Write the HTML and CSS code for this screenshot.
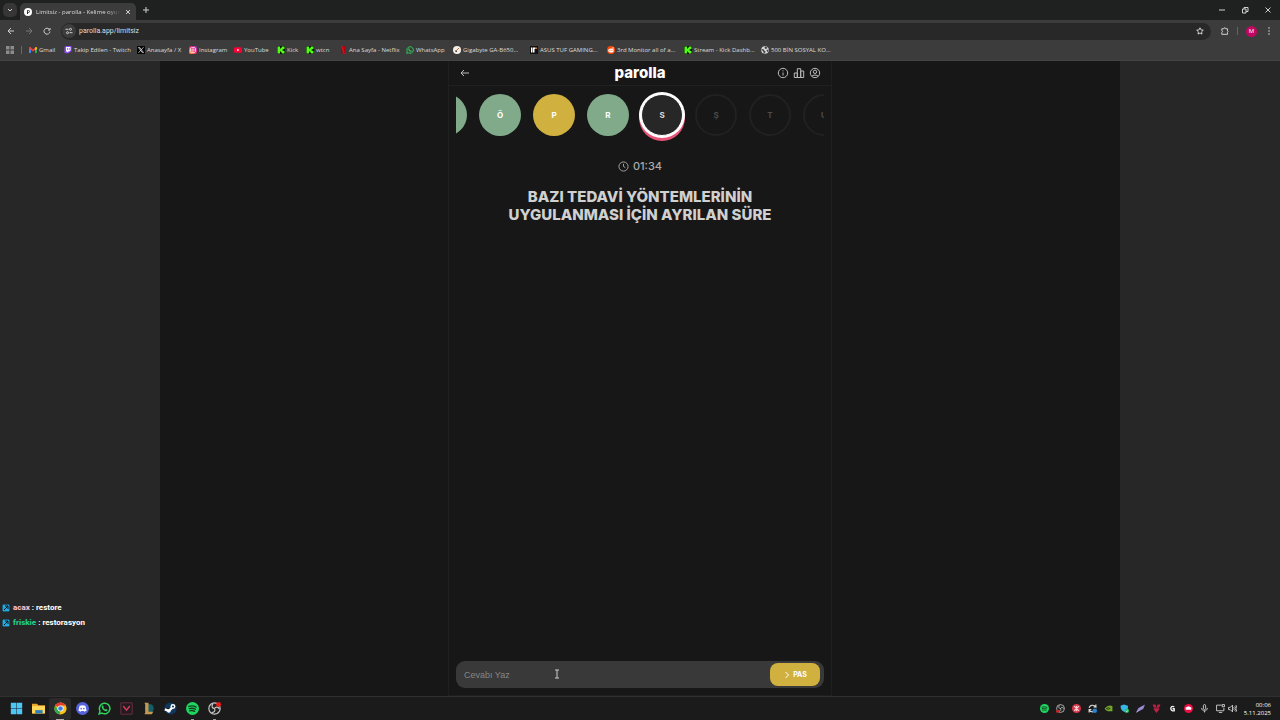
FILE: index.html
```html
<!DOCTYPE html>
<html lang="tr">
  <head>
    <meta charset="utf-8">
    <title>Limitsiz - parolla - Kelime oyunu</title>
    <link rel="stylesheet" href="styles.css">
  </head>
  <body>
    <svg class="defs" aria-hidden="true">
      <symbol id="kick" viewBox="0 0 16 16"><path fill="#0b1408" d="M0 0h16v16H0z"/><path fill="#53fc18" d="M1 1h5v4h2V3h2V1h5v5h-2v1h-2v2h2v1h2v5h-5v-2H8v-2H6v4H1z"/></symbol>
      <symbol id="whatsapp" viewBox="0 0 16 16"><path fill="none" stroke="#2fd45d" stroke-width="1.8" d="M1.4 14.6l1-3.6A6.5 6.5 0 1 1 5 13.7z"/><path fill="#2fd45d" d="M5.3 4.3l1-.1.8 2-.6.9c.5 1 1.300 1.700 2.400 2.200l.8-.8 2 1c0 1.300-1.200 2-2.300 1.800C6.500 10.700 4.800 8.500 4.500 6.300c0-.8.3-1.500.8-2z"/></symbol>
      <symbol id="spotify" viewBox="0 0 16 16"><circle cx="8" cy="8" r="8" fill="#1ed760"/><path fill="none" stroke="#143c20" stroke-width="1.600" stroke-linecap="round" d="M3.500 5.500c3-1 6.500-.7 9 .8M4 8.200c2.700-.8 5.500-.5 7.700.8M4.500 10.800c2.200-.6 4.300-.4 6.200.7"/></symbol>
      <symbol id="obs" viewBox="0 0 16 16"><circle cx="8" cy="8" r="7" fill="#222" stroke="#c8c8c8" stroke-width="1.400"/><path fill="none" stroke="#c8c8c8" stroke-width="1.400" d="M8 8C5 8 4 5 6 2.500M8 8c1.500-2.600 4.500-2.200 6 .5M8 8c1.500 2.600-.5 5-3.500 5"/></symbol>
    </svg>

    <header class="browser">
      <div class="tabs">
        <button class="tab-search" aria-label="Sekmelerde ara"><svg viewBox="0 0 8 8"><path d="M2 3l2 2 2-2"/></svg></button>
        <div class="tab">
          <svg class="favicon" viewBox="0 0 16 16"><circle cx="8" cy="8" r="8" fill="#fff"/><path fill="none" stroke="#333" stroke-width="2" d="M7 12V5h2a2 2 0 0 1 0 4H7"/></svg>
          <span class="tab-title">Limitsiz - parolla - Kelime oyunu</span>
          <button aria-label="Sekmeyi kapat"><svg viewBox="0 0 8 8"><path d="M2 2l4 4M6 2L2 6"/></svg></button>
        </div>
        <button class="new-tab" aria-label="Yeni sekme"><svg viewBox="0 0 8 8"><path d="M4 1v6M1 4h6"/></svg></button>
        <div class="window-buttons">
          <button aria-label="Küçült"><svg viewBox="0 0 8 8"><path d="M1 4h6"/></svg></button>
          <button aria-label="Geri yükle"><svg viewBox="0 0 8 8"><path d="M1.500 3h3.500v4H1.500zM3 3V1.500h4v4H5"/></svg></button>
          <button aria-label="Kapat"><svg viewBox="0 0 8 8"><path d="M1.500 1.500l5 5M6.500 1.500l-5 5"/></svg></button>
        </div>
      </div>

      <div class="toolbar">
        <button aria-label="Geri"><svg viewBox="0 0 8 8"><path d="M7 4H1M4 1L1 4l3 3"/></svg></button>
        <button aria-label="İleri" disabled><svg viewBox="0 0 8 8"><path d="M1 4h6M4 1l3 3-3 3"/></svg></button>
        <button aria-label="Yenile"><svg viewBox="0 0 8 8"><path d="M6.500 2.500A3 3 0 1 0 7 4.500M7 1v2H5"/></svg></button>
        <div class="address">
          <button class="site-info" aria-label="Site bilgileri"><svg viewBox="0 0 8 8"><path d="M.5 2.300h3M4.500 5.700h3"/><circle cx="5.500" cy="2.300" r="1"/><circle cx="2.500" cy="5.700" r="1"/></svg></button>
          <input type="text" aria-label="Adres" value="parolla.app/limitsiz">
          <button aria-label="Yer işareti ekle"><svg viewBox="0 0 8 8"><path d="M4 .8l1 2.100 2.300.3-1.700 1.600.4 2.300L4 6l-2 1.100.4-2.300L.7 3.200 3 2.900z"/></svg></button>
        </div>
        <div class="toolbar-end">
          <button aria-label="Uzantılar"><svg viewBox="0 0 8 8"><path d="M.8 1.800h2a1 1 0 0 1 2 0h1.700v2a1 1 0 0 1 0 1.600v1.900H.8V5.500a1 1 0 0 0 0-1.900z"/></svg></button>
          <span class="divider"></span>
          <button class="profile">M</button>
          <button aria-label="Menü"><svg class="dots" viewBox="0 0 8 8"><circle cx="4" cy="1" r=".8"/><circle cx="4" cy="4" r=".8"/><circle cx="4" cy="7" r=".8"/></svg></button>
        </div>
      </div>

      <nav class="bookmarks">
        <button aria-label="Uygulamalar"><svg viewBox="0 0 8 8"><path fill="#8b8b8b" stroke="none" d="M0 0h3.500v3.500H0zM4.500 0H8v3.500H4.500zM0 4.500h3.500V8H0zM4.500 4.500H8V8H4.500z"/></svg></button>
        <span class="divider"></span>
        <a href="#"><svg viewBox="0 0 16 16"><path fill="#4285f4" d="M0 3h4v11H0z"/><path fill="#34a853" d="M12 5h4v9h-4z"/><path fill="#ea4335" d="M0 3l3-1 5 5 5-5v5l-5 4-8-6z"/><path fill="#fbbc04" d="M12 3l4-1v4l-4 3z"/></svg><span>Gmail</span></a>
        <a href="#"><svg viewBox="0 0 16 16"><path fill="#9146ff" d="M3 0h12v10l-5 4H8l-3 2v-2H1V3z"/><path fill="#fff" d="M4 2h9v7l-3 2H8l-2 2v-2H4z"/><path stroke="#9146ff" stroke-width="1.500" d="M7 4v4M10.500 4v4"/></svg><span>Takip Edilen - Twitch</span></a>
        <a href="#"><svg viewBox="0 0 16 16"><path fill="#050505" d="M0 0h16v16H0z"/><path fill="none" stroke="#fff" stroke-width="1.300" d="M3 3h2.500L13 13h-2.500zM13 2.500L3 13.500"/></svg><span>Anasayfa / X</span></a>
        <a href="#"><svg viewBox="0 0 16 16"><defs><linearGradient id="insta" x1="0" y1="1" x2="1" y2="0"><stop offset="0" stop-color="#ffb33b"/><stop offset=".5" stop-color="#ee2b68"/><stop offset="1" stop-color="#9a37d1"/></linearGradient></defs><rect width="16" height="16" rx="4" fill="url(#insta)"/><rect x="3" y="3" width="10" height="10" rx="3" fill="none" stroke="#fff" stroke-width="1.400"/><circle cx="8" cy="8" r="2.300" fill="none" stroke="#fff" stroke-width="1.400"/></svg><span>Instagram</span></a>
        <a href="#"><svg viewBox="0 0 16 16"><rect y="2.500" width="16" height="11" rx="3" fill="#f03"/><path fill="#fff" d="M6.500 5.500v5L11 8z"/></svg><span>YouTube</span></a>
        <a href="#"><svg><use href="#kick"/></svg><span>Kick</span></a>
        <a href="#"><svg><use href="#kick"/></svg><span>wtcn</span></a>
        <a href="#"><svg viewBox="0 0 16 16"><path fill="#a8000c" d="M4 0h3v16H4zM9 0h3v16H9z"/><path fill="#d8101c" d="M4 0h3l5 16H9z"/></svg><span>Ana Sayfa - Netflix</span></a>
        <a href="#"><svg><use href="#whatsapp"/></svg><span>WhatsApp</span></a>
        <a href="#"><svg viewBox="0 0 16 16"><circle cx="8" cy="8" r="8" fill="#f5eee6"/><path stroke="#d56a2a" stroke-width="2" d="M7 9l5-5"/><path fill="#444" d="M4 9h4v3H5z"/></svg><span>Gigabyte GA-B650...</span></a>
        <a href="#"><svg viewBox="0 0 16 16"><path fill="#111" d="M0 0h16v16H0z"/><path fill="#fff" d="M2 3h3v10H2zM6 3h5v3H9v7H6z"/><path fill="#e8793a" d="M11 3h3v3h-3z"/></svg><span>ASUS TUF GAMING...</span></a>
        <a href="#"><svg viewBox="0 0 16 16"><circle cx="8" cy="8" r="8" fill="#ff4500"/><ellipse cx="8" cy="9" rx="5.500" ry="4" fill="#fff"/><circle cx="12" cy="4" r="1.500" fill="#fff"/><circle cx="6" cy="8.500" r="1.100" fill="#ff4500"/><circle cx="10" cy="8.500" r="1.100" fill="#ff4500"/></svg><span>3rd Monitor all of a...</span></a>
        <a href="#"><svg><use href="#kick"/></svg><span>Stream - Kick Dashb...</span></a>
        <a href="#"><svg viewBox="0 0 16 16"><circle cx="8" cy="8" r="7.500" fill="#d8d8d8"/><path fill="#444" d="M2 6l4 1 1 3 2 1-1 4-3-2-1-3-3-2zM8 1l5 2-1 2-3 1-2-2zM11 8l4-1-1 4-2 1z"/></svg><span>500 BİN SOSYAL KO...</span></a>
      </nav>
    </header>

    <main class="page">
      <section class="game">
        <div class="game-header">
          <a href="#" aria-label="Geri dön"><svg viewBox="0 0 12 12"><path d="M10 6H2M5 3L2 6l3 3"/></svg></a>
          <h1>parolla</h1>
          <div class="game-actions">
            <button aria-label="Nasıl oynanır"><svg viewBox="0 0 12 12"><circle cx="6" cy="6" r="4.700"/><path d="M6 5.500v3M6 3.300v1"/></svg></button>
            <button aria-label="İstatistikler"><svg viewBox="0 0 12 12"><path d="M1.300 6h3v4.500h-3zM4.300 1.700h3.400v8.800H4.300zM7.700 4h3v6.500h-3z"/></svg></button>
            <button aria-label="Profil"><svg viewBox="0 0 12 12"><circle cx="6" cy="6" r="4.700"/><circle cx="6" cy="4.800" r="1.700"/><path d="M2.800 9.400c.7-1.800 5.700-1.800 6.400 0"/></svg></button>
          </div>
        </div>

        <div class="letters">
          <span class="letter correct"></span>
          <span class="letter correct">Ö</span>
          <span class="letter passed">P</span>
          <span class="letter correct">R</span>
          <span class="letter active">S</span>
          <span class="letter">Ş</span>
          <span class="letter">T</span>
          <span class="letter">U</span>
        </div>

        <div class="timer">
          <svg viewBox="0 0 12 12"><circle cx="6" cy="6" r="5"/><path d="M6 3v3l2 1.300"/></svg>
          <span>01:34</span>
        </div>
        <h2 class="question">BAZI TEDAVİ YÖNTEMLERİNİN UYGULANMASI İÇİN AYRILAN SÜRE</h2>

        <form class="answer">
          <input type="text" placeholder="Cevabı Yaz" aria-label="Cevabı Yaz">
          <button type="button"><svg viewBox="0 0 8 8"><path d="M2.500 1l3 3-3 3"/></svg>PAS</button>
          <svg class="cursor" viewBox="0 0 6 10"><path d="M1 1h4M3 1v8M1 9h4"/></svg>
        </form>
      </section>
    </main>

    <ul class="chat">
      <li><svg viewBox="0 0 8 8"><rect width="8" height="8" rx="1" fill="#27a9e0"/><path d="M2 6l4-4M3 2h3v3"/></svg><b class="acax">acax</b> : restore</li>
      <li><svg viewBox="0 0 8 8"><rect width="8" height="8" rx="1" fill="#27a9e0"/><path d="M2 6l4-4M3 2h3v3"/></svg><b class="friskie">friskie</b> : restorasyon</li>
    </ul>

    <footer class="taskbar">
      <div class="apps">
        <button aria-label="Başlat"><svg viewBox="0 0 16 16"><path fill="#4cc8f5" d="M1 1h6.700v6.700H1zM8.300 1H15v6.700H8.300zM1 8.300h6.700V15H1zM8.300 8.300H15V15H8.300z"/></svg></button>
        <button aria-label="Dosya Gezgini"><svg viewBox="0 0 16 16"><path fill="#e8a92d" d="M0 2h6l2 2h8v10H0z"/><path fill="#ffd65c" d="M0 5h16v9H0z"/><path fill="#2b7fb9" d="M4 10h9v4H4z"/></svg></button>
        <button class="running current" aria-label="Chrome"><svg viewBox="0 0 16 16"><circle cx="8" cy="8" r="7.500" fill="#fbc116"/><path fill="#e33b2e" d="M8 8L1.500 4.300a7.500 7.500 0 0 1 13 0H8z"/><path fill="#2da94f" d="M1.500 4.300L5 10l3 1.500-1.500 4A7.500 7.500 0 0 1 1.500 4.300z"/><circle cx="8" cy="8" r="3.700" fill="#fff"/><circle cx="8" cy="8" r="2.800" fill="#3c7de6"/></svg></button>
        <button aria-label="Discord"><svg viewBox="0 0 16 16"><circle cx="8" cy="8" r="8" fill="#5661dc"/><path fill="#fff" d="M4.500 4.500Q8 3.500 11.500 4.500l1.500 6-2.500 1.500-1-1h-3l-1 1L3 10.500z"/><circle cx="6.300" cy="8.200" r="1" fill="#5661dc"/><circle cx="9.700" cy="8.200" r="1" fill="#5661dc"/></svg></button>
        <button aria-label="WhatsApp"><svg><use href="#whatsapp"/></svg></button>
        <button aria-label="Valorant"><svg viewBox="0 0 16 16"><path fill="#241a20" stroke="#7c3046" d="M1 1h14v14H1z"/><path fill="none" stroke="#ce3e5c" stroke-width="1.800" d="M4 5l4 5 4-5"/></svg></button>
        <button aria-label="League of Legends"><svg viewBox="0 0 16 16"><circle cx="9" cy="8" r="5.500" fill="#155d69"/><path fill="#c59a50" d="M3 1h5v11h6l-2 3H3l1-2V3z"/></svg></button>
        <button aria-label="Steam"><svg viewBox="0 0 16 16"><circle cx="8" cy="8" r="7.500" fill="#12375f"/><path stroke="#fff" stroke-width="3" d="M1 9l5 2 5-5"/><circle cx="11" cy="5.500" r="3" fill="#fff"/><circle cx="11" cy="5.500" r="1.300" fill="#12375f"/><circle cx="6" cy="11" r="2.200" fill="#fff"/></svg></button>
        <button class="running" aria-label="Spotify"><svg><use href="#spotify"/></svg></button>
        <button class="running" aria-label="OBS Studio"><svg viewBox="0 0 16 16"><use href="#obs"/><circle cx="13" cy="3" r="3" fill="#f01919"/></svg></button>
      </div>
      <div class="tray">
        <svg><use href="#spotify"/></svg>
        <svg viewBox="0 0 16 16"><use href="#obs"/><circle cx="3" cy="13" r="3" fill="#c22"/></svg>
        <svg viewBox="0 0 16 16"><circle cx="8" cy="8" r="8" fill="#d8354a"/><path fill="none" stroke="#ffd0d4" stroke-width="2" d="M4 4l8 8M12 4l-8 8M8 3v10"/></svg>
        <svg viewBox="0 0 16 16"><path fill="none" stroke="#ddd" stroke-width="2" d="M2 7c1-6 9-6 12-2V1M14 5h-4M2 15v-5h4M2 11c2 3 5 3 7 3"/><circle cx="12" cy="12" r="4" fill="#2584d8"/></svg>
        <svg viewBox="0 0 16 16"><path fill="#76a72d" d="M1 8q7-8 14-4v9H7q-4-1-6-5z"/><path fill="none" stroke="#243411" stroke-width="1.500" d="M4 8q4-3 7 0-3 3-7 0"/></svg>
        <svg viewBox="0 0 16 16"><path fill="#35b8e8" d="M1 3l6-2 7 2v5c0 3-3 5-6 6-5-2-7-5-7-11z"/><circle cx="12" cy="12" r="4" fill="#28ba69"/><path fill="none" stroke="#fff" d="M10 12l2 2 2-3"/></svg>
        <svg viewBox="0 0 16 16"><path fill="#8b78c9" d="M0 15L4 7 16 1l-3 8-8 4z"/><path stroke="#ddd" d="M1 15L13 4"/></svg>
        <svg viewBox="0 0 16 16"><path fill="#bc2146" d="M1 1h5l2 5 2-5h5l-3 7h2l-6 8-6-8h2z"/><path stroke="#1b1b1b" d="M2 7h12"/></svg>
        <svg viewBox="0 0 16 16"><path fill="none" stroke="#eee" stroke-width="2.500" d="M11 5c-3-2-6 0-6 3s3 5 6 4V8.500H8"/></svg>
        <svg viewBox="0 0 16 16"><circle cx="8" cy="8" r="8" fill="#ed0d43"/><path fill="#fff" d="M3 6l5-2 5 2v4H3z"/></svg>
        <svg viewBox="0 0 16 16"><path fill="none" stroke="#ddd" stroke-width="1.500" d="M6 3a2 2 0 0 1 4 0v5a2 2 0 0 1-4 0zM3 7c0 7 10 7 10 0M8 12v3"/></svg>
        <div class="tray-group">
          <svg viewBox="0 0 16 16"><path fill="none" stroke="#ddd" stroke-width="1.500" d="M10 2H1v10h13V7M5 15h6M11 1h4v4h-4z"/></svg>
          <svg viewBox="0 0 16 16"><path fill="none" stroke="#ddd" stroke-width="1.500" d="M1 6h3l4-4v12l-4-4H1zM10 6q2 2 0 4M12 4q4 4 0 8M14 2q5 6 0 12"/></svg>
        </div>
      </div>
      <div class="clock"><time>00:06</time><span>5.11.2025</span></div>
    </footer>
  </body>
</html>
```
FILE: styles.css
```css
* {
  box-sizing: border-box;
}
body {
  display: flex;
  flex-direction: column;
  min-height: 100vh;
  margin: 0;
  background: #272727;
  color: #ddd;
  font-family: "Open Sans", "Noto Sans", sans-serif;
  font-size: 6px;
}
button, input {
  padding: 0;
  border: 0;
  background: none;
  color: inherit;
  font: inherit;
}
button {
  display: flex;
  align-items: center;
  justify-content: center;
}
a {
  color: inherit;
  text-decoration: none;
}
svg {
  flex: none;
  width: 8px;
  height: 8px;
}
.defs {
  position: absolute;
  width: 0;
  height: 0;
}

/* browser */
.browser {
  background: #3c3c3c;
}
.browser button svg {
  fill: none;
  stroke: #d0d0d0;
  stroke-width: 1;
}
.tabs {
  display: flex;
  align-items: center;
  height: 20px;
  padding-left: 3px;
  background: #1f2120;
}
.tab-search {
  width: 14px;
  height: 14px;
  border-radius: 5px;
  background: #363636;
}
.tab {
  display: flex;
  align-items: center;
  gap: 4px;
  align-self: flex-end;
  width: 116px;
  height: 17px;
  margin-left: 3px;
  padding: 0 4px;
  border-radius: 5px 5px 0 0;
  background: #3c3c3c;
}
.tab-title {
  flex: 1;
  overflow: hidden;
  white-space: nowrap;
  mask-image: linear-gradient(90deg, #000 85%, transparent);
}
.new-tab {
  margin-left: 6px;
}
.window-buttons {
  display: flex;
  gap: 15px;
  margin-left: auto;
  padding-right: 8px;
}
.toolbar {
  display: flex;
  align-items: center;
  gap: 10px;
  height: 22px;
  padding: 0 7px;
}
.toolbar button:disabled {
  opacity: 0.4;
}
.address {
  display: flex;
  flex: 1;
  align-items: center;
  gap: 3px;
  height: 17px;
  padding: 0 7px 0 1px;
  border-radius: 9px;
  background: #282828;
}
.site-info {
  width: 14px;
  height: 14px;
  border-radius: 7px;
  background: #3c3c3c;
}
.address input {
  flex: 1;
  min-width: 0;
  font-family: Roboto, sans-serif;
  font-size: 7px;
}
.toolbar-end {
  display: flex;
  align-items: center;
  gap: 8px;
}
.divider {
  width: 1px;
  height: 8px;
  background: #666;
}
.profile {
  width: 11px;
  height: 11px;
  border-radius: 50%;
  background: #c2075f;
  color: #fff;
}
.browser .dots {
  fill: #d0d0d0;
  stroke: none;
}
.bookmarks {
  display: grid;
  grid-template-columns: 15px 8px 35px 73px 52px 45px 43px 29px 33px 67px 47px 77px 77px 77px 77px 70px;
  align-items: center;
  height: 19px;
  padding-left: 6px;
  padding-bottom: 2px;
  border-bottom: 1px solid #444;
}
.bookmarks button {
  justify-content: flex-start;
}
.bookmarks a {
  display: flex;
  align-items: center;
  gap: 2px;
  white-space: nowrap;
}

/* game */
.page {
  display: flex;
  flex: 1;
  justify-content: center;
  width: 75%;
  margin: 0 auto;
  background: #171717;
}
.game {
  display: flex;
  flex-direction: column;
  width: 384px;
  border: 1px solid #1f1f1f;
  border-top: 0;
  font-family: Inter, sans-serif;
}
.game svg {
  fill: none;
  stroke: currentColor;
  stroke-width: 1;
}
.game-header {
  display: grid;
  grid-template-columns: 1fr auto 1fr;
  align-items: center;
  height: 25px;
  padding: 0 10px;
  border-bottom: 1px solid #212121;
  color: #bbb;
}
.game-header a {
  display: flex;
}
.game-header svg {
  width: 12px;
  height: 12px;
}
h1 {
  margin: 0;
  color: #fff;
  font-size: 15px;
  font-weight: 800;
  line-height: 16px;
}
.game-actions {
  display: flex;
  gap: 4px;
  justify-content: flex-end;
}
.letters {
  display: flex;
  gap: 12px;
  margin: 0 7px;
  padding: 8px 0;
  overflow: hidden;
}
.letter {
  display: flex;
  flex: none;
  align-items: center;
  justify-content: center;
  width: 42px;
  height: 42px;
  border: 2px solid #212121;
  border-radius: 50%;
  color: #4c4c4c;
  font-size: 8px;
  font-weight: 700;
}
.letter:first-child {
  margin-left: -31px;
}
.correct {
  border: 0;
  background: #80aa8a;
  color: #fff;
}
.passed {
  border: 0;
  background: #d0b13f;
  color: #fff;
}
.active {
  border: 1px solid #fff;
  background: #272727;
  color: #ddd;
  box-shadow: 0 0 0 2px #fff, 0 3px 0 2px #e75478;
}
.timer {
  display: flex;
  align-items: center;
  justify-content: center;
  gap: 4px;
  margin-top: 15px;
  color: #aaa;
  font-size: 11px;
  font-weight: 500;
  line-height: 14px;
}
.timer svg {
  width: 11px;
  height: 11px;
}
.question {
  width: 304px;
  margin: 15px auto;
  color: #d0d0d0;
  font-size: 15px;
  font-weight: 800;
  line-height: 18px;
  text-align: center;
}
.answer {
  position: relative;
  display: flex;
  align-items: center;
  height: 27px;
  margin: auto 7px 7px;
  padding: 0 4px 0 8px;
  border-radius: 9px;
  background: #393939;
}
.answer input {
  flex: 1;
  min-width: 0;
  font-family: "Liberation Sans", sans-serif;
  font-size: 9px;
}
.answer input::placeholder {
  color: #858585;
  opacity: 1;
}
.answer button {
  gap: 2px;
  width: 50px;
  height: 23px;
  border-radius: 8px;
  background: #d0b13f;
  color: #fff;
  font-size: 7px;
  font-weight: 700;
}
.answer .cursor {
  position: absolute;
  left: 98px;
  top: 8px;
  width: 6px;
  height: 10px;
  color: #ccc;
}

/* stream chat, over the page */
.chat {
  position: absolute;
  left: 2px;
  bottom: 90px;
  margin: 0;
  padding: 0;
  color: #fff;
  font-family: Roboto, sans-serif;
  font-size: 8px;
  font-weight: 700;
  line-height: 15px;
  list-style: none;
}
.chat svg {
  margin-right: 3px;
  vertical-align: middle;
  fill: none;
  stroke: #111;
}
.acax {
  color: #f3b9cb;
}
.friskie {
  color: #21c988;
}

/* taskbar */
.taskbar {
  display: flex;
  align-items: center;
  height: 24px;
  padding: 0 9px 0 5px;
  border-top: 1px solid #303030;
  background: #1b1b1b;
}
.apps {
  display: flex;
  flex: 1;
}
.apps button {
  width: 22px;
  height: 22px;
  border-radius: 3px;
}
.apps svg {
  width: 13px;
  height: 13px;
}
.running {
  background: linear-gradient(#999, #999) center bottom / 3px 1px no-repeat;
}
.apps .current {
  background: linear-gradient(#aaa, #aaa) center bottom / 8px 1px no-repeat #2a2a2a;
}
.tray, .tray-group {
  display: flex;
  gap: 7px;
}
.tray-group {
  gap: 3px;
}
.tray svg {
  width: 9px;
  height: 9px;
}
.clock {
  display: flex;
  flex-direction: column;
  width: 34px;
  color: #fff;
  line-height: 8px;
  text-align: right;
}
```
